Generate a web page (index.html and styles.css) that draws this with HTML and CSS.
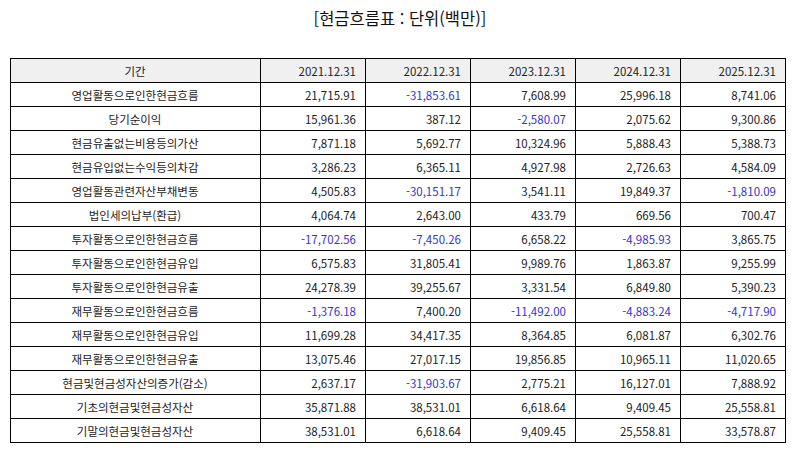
FILE: index.html
```html
<!DOCTYPE html>
<html lang="ko">
<head>
<meta charset="utf-8">
<title>현금흐름표</title>
<link rel="stylesheet" href="styles.css">
</head>
<body>
<h1 class="title">[현금흐름표 : 단위(백만)]</h1>
<table class="cf">
  <colgroup>
    <col class="c-label"><col class="c-num"><col class="c-num"><col class="c-num"><col class="c-num"><col class="c-num">
  </colgroup>
  <thead>
    <tr><th class="label">기간</th><th>2021.12.31</th><th>2022.12.31</th><th>2023.12.31</th><th>2024.12.31</th><th>2025.12.31</th></tr>
  </thead>
  <tbody>
    <tr><td class="label">영업활동으로인한현금흐름</td><td>21,715.91</td><td class="neg">-31,853.61</td><td>7,608.99</td><td>25,996.18</td><td>8,741.06</td></tr>
    <tr><td class="label">당기순이익</td><td>15,961.36</td><td>387.12</td><td class="neg">-2,580.07</td><td>2,075.62</td><td>9,300.86</td></tr>
    <tr><td class="label">현금유출없는비용등의가산</td><td>7,871.18</td><td>5,692.77</td><td>10,324.96</td><td>5,888.43</td><td>5,388.73</td></tr>
    <tr><td class="label">현금유입없는수익등의차감</td><td>3,286.23</td><td>6,365.11</td><td>4,927.98</td><td>2,726.63</td><td>4,584.09</td></tr>
    <tr><td class="label">영업활동관련자산부채변동</td><td>4,505.83</td><td class="neg">-30,151.17</td><td>3,541.11</td><td>19,849.37</td><td class="neg">-1,810.09</td></tr>
    <tr><td class="label">법인세의납부(환급)</td><td>4,064.74</td><td>2,643.00</td><td>433.79</td><td>669.56</td><td>700.47</td></tr>
    <tr><td class="label">투자활동으로인한현금흐름</td><td class="neg">-17,702.56</td><td class="neg">-7,450.26</td><td>6,658.22</td><td class="neg">-4,985.93</td><td>3,865.75</td></tr>
    <tr><td class="label">투자활동으로인한현금유입</td><td>6,575.83</td><td>31,805.41</td><td>9,989.76</td><td>1,863.87</td><td>9,255.99</td></tr>
    <tr><td class="label">투자활동으로인한현금유출</td><td>24,278.39</td><td>39,255.67</td><td>3,331.54</td><td>6,849.80</td><td>5,390.23</td></tr>
    <tr><td class="label">재무활동으로인한현금흐름</td><td class="neg">-1,376.18</td><td>7,400.20</td><td class="neg">-11,492.00</td><td class="neg">-4,883.24</td><td class="neg">-4,717.90</td></tr>
    <tr><td class="label">재무활동으로인한현금유입</td><td>11,699.28</td><td>34,417.35</td><td>8,364.85</td><td>6,081.87</td><td>6,302.76</td></tr>
    <tr><td class="label">재무활동으로인한현금유출</td><td>13,075.46</td><td>27,017.15</td><td>19,856.85</td><td>10,965.11</td><td>11,020.65</td></tr>
    <tr><td class="label">현금및현금성자산의증가(감소)</td><td>2,637.17</td><td class="neg">-31,903.67</td><td>2,775.21</td><td>16,127.01</td><td>7,888.92</td></tr>
    <tr><td class="label">기초의현금및현금성자산</td><td>35,871.88</td><td>38,531.01</td><td>6,618.64</td><td>9,409.45</td><td>25,558.81</td></tr>
    <tr><td class="label">기말의현금및현금성자산</td><td>38,531.01</td><td>6,618.64</td><td>9,409.45</td><td>25,558.81</td><td>33,578.87</td></tr>
  </tbody>
</table>
</body>
</html>
```

FILE: styles.css
```css
html, body {
  margin: 0;
  padding: 0;
  background: #ffffff;
}
body {
  font-family: "Noto Sans CJK KR", "Noto Sans", sans-serif;
  color: #222222;
  padding: 7px 8px 0 10px;
}
.title {
  margin: 0;
  height: 51px;
  font-size: 16.5px;
  font-weight: 400;
  line-height: 22px;
  text-align: center;
  color: #111111;
  padding-left: 4px;
}
.cf {
  border-collapse: collapse;
  width: 776px;
  table-layout: fixed;
  font-size: 11.5px;
}
.c-label { width: 250px; }
.c-num { width: 105px; }
.cf th, .cf td {
  border: 1px solid #000000;
  height: 22px;
  padding: 1px 9px 0 8px;
  text-align: right;
  font-weight: 400;
  line-height: 14px;
  white-space: nowrap;
}
.cf thead th {
  background: #f0f0f0;
}
.cf .label {
  text-align: center;
}
.cf .neg {
  color: #3434d0;
}
```
